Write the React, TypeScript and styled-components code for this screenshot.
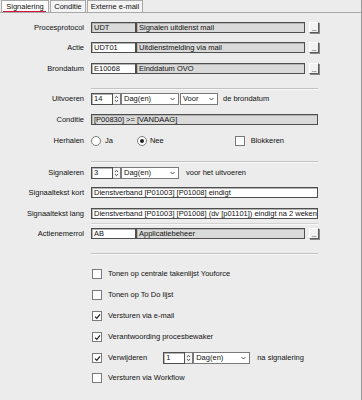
import React from "react";
import styled, { createGlobalStyle } from "styled-components";

const Global = createGlobalStyle`
  html, body { margin: 0; padding: 0; background: #ececec; }
  body { font-family: "Liberation Sans", Arial, sans-serif; font-size: 7.5px; color: #111; }
  * { box-sizing: border-box; }
`;

const Page = styled.div`
  width: 362px;
  height: 400px;
  background: #ececec;
  border-right: 1px solid #9a9a9a;
  display: flex;
  flex-direction: column;
  overflow: hidden;
`;

const TabStrip = styled.div`
  height: 13px;
  display: flex;
  align-items: flex-end;
  border-bottom: 1px solid #a8a8a8;
  padding-left: 1px;
`;

const Tab = styled.div<{ $active?: boolean; $w: number }>`
  position: relative;
  width: ${(p) => p.$w}px;
  height: 12px;
  margin-right: 1px;
  background: ${(p) => (p.$active ? "#ffffff" : "#f3f3f3")};
  border: 1px solid #a8a8a8;
  border-bottom: none;
  display: flex;
  align-items: center;
  justify-content: center;
  line-height: 1;
  color: #111;
`;

const TabMark = styled.span`
  position: absolute;
  left: 1px;
  right: 2px;
  bottom: 0px;
  height: 1px;
  background: #d4163c;
`;

const Body = styled.div`
  display: flex;
  flex-direction: column;
`;

const Row = styled.div<{ $mt: number; $h?: number }>`
  display: flex;
  align-items: center;
  margin-top: ${(p) => p.$mt}px;
  height: ${(p) => p.$h ?? 11}px;
`;

const Label = styled.div`
  width: 84px;
  margin-right: 7px;
  text-align: right;
  white-space: nowrap;
  line-height: 1;
`;

const Box = styled.div<{ $w: number; $gray?: boolean; $h?: number }>`
  width: ${(p) => p.$w}px;
  height: ${(p) => p.$h ?? 11}px;
  background: ${(p) => (p.$gray ? "#dadada" : "#ffffff")};
  border: 1px solid #4e4e4e;
  box-shadow: inset 1px 1px 0 #b4b4b4;
  padding-left: 2px;
  display: flex;
  align-items: center;
  white-space: nowrap;
  overflow: hidden;
  line-height: 1;
  flex: none;
`;

const Dots = styled.div`
  width: 10px;
  height: 11px;
  margin-left: 4px;
  background: #f2f2f2;
  border: 1px solid;
  border-color: #ffffff #5a5a5a #5a5a5a #ffffff;
  box-shadow: 1px 1px 0 #8a8a8a;
  display: flex;
  align-items: flex-end;
  justify-content: center;
  font-size: 7px;
  line-height: 6px;
  letter-spacing: -0.5px;
  flex: none;
`;

const Spin = styled.div`
  width: 8px;
  height: 12px;
  border: 1px solid #7a7a7a;
  border-left: none;
  background: #f4f4f4;
  display: flex;
  align-items: center;
  justify-content: center;
  flex: none;
`;

const Select = styled.div<{ $w: number; $ml?: number }>`
  width: ${(p) => p.$w}px;
  height: 12px;
  margin-left: ${(p) => p.$ml ?? 0}px;
  background: #ffffff;
  border: 1px solid #7a7a7a;
  padding: 0 3px 0 2px;
  display: flex;
  align-items: center;
  justify-content: space-between;
  line-height: 1;
  flex: none;
`;

const Text = styled.span<{ $ml: number }>`
  margin-left: ${(p) => p.$ml}px;
  white-space: nowrap;
  line-height: 1;
`;

const Sep = styled.div<{ $mt: number; $light?: boolean }>`
  margin-top: ${(p) => p.$mt}px;
  margin-left: 91px;
  width: 227px;
  height: 1px;
  background: ${(p) => (p.$light ? "#d2d2d2" : "#c2c2c2")};
  box-shadow: 0 1px 0 #f8f8f8;
`;

const Radio = styled.span<{ $ml: number; $on?: boolean }>`
  margin-left: ${(p) => p.$ml}px;
  width: 10px;
  height: 10px;
  border-radius: 50%;
  border: 1px solid #7a7a7a;
  background: #fff;
  display: flex;
  align-items: center;
  justify-content: center;
  flex: none;
  &::after {
    content: "";
    display: ${(p) => (p.$on ? "block" : "none")};
    width: 4px;
    height: 4px;
    border-radius: 50%;
    background: #222;
  }
`;

const Check = styled.span<{ $ml: number }>`
  margin-left: ${(p) => p.$ml}px;
  width: 10px;
  height: 10px;
  border: 1px solid #7a7a7a;
  background: #fff;
  display: flex;
  align-items: center;
  justify-content: center;
  flex: none;
`;

const Chevron = () => (
  <svg width="5" height="4" viewBox="0 0 5 4">
    <path d="M0.5 1 L2.5 3 L4.5 1" fill="none" stroke="#444" strokeWidth="0.9" />
  </svg>
);

const SpinIcon = () => (
  <svg width="5" height="8" viewBox="0 0 5 8">
    <path d="M1 3 L2.5 1.3 L4 3" fill="none" stroke="#444" strokeWidth="0.9" />
    <path d="M1 5 L2.5 6.7 L4 5" fill="none" stroke="#444" strokeWidth="0.9" />
  </svg>
);

const Tick = () => (
  <svg width="7" height="7" viewBox="0 0 7 7">
    <path d="M1 3.6 L2.8 5.4 L6 1.4" fill="none" stroke="#222" strokeWidth="1.3" />
  </svg>
);

const CheckBox = ({ on, ml }: { on?: boolean; ml: number }) => (
  <Check $ml={ml}>{on ? <Tick /> : null}</Check>
);

const NumberSpin = ({ value, ml, w }: { value: string; ml?: number; w: number }) => (
  <>
    <Box $w={w} $h={12} style={ml ? { marginLeft: ml } : undefined}>
      {value}
    </Box>
    <Spin>
      <SpinIcon />
    </Spin>
  </>
);

const Dropdown = ({ label, w, ml }: { label: string; w: number; ml?: number }) => (
  <Select $w={w} $ml={ml}>
    <span>{label}</span>
    <Chevron />
  </Select>
);

const LookupRow = ({
  mt,
  label,
  code,
  desc,
  codeGray,
}: {
  mt: number;
  label: string;
  code: string;
  desc: string;
  codeGray?: boolean;
}) => (
  <Row $mt={mt}>
    <Label>{label}</Label>
    <Box $w={45} $gray={codeGray}>
      {code}
    </Box>
    <Box $w={169} $gray>
      {desc}
    </Box>
    <Dots>...</Dots>
  </Row>
);

const CheckRow = ({ mt, on, label, children }: { mt: number; on?: boolean; label: string; children?: React.ReactNode }) => (
  <Row $mt={mt} $h={12}>
    <CheckBox on={on} ml={92} />
    <Text $ml={6}>{label}</Text>
    {children}
  </Row>
);

export default function App() {
  return (
    <Page>
      <Global />
      <TabStrip>
        <Tab $active $w={48}>
          Signalering
          <TabMark />
        </Tab>
        <Tab $w={36}>Conditie</Tab>
        <Tab $w={56}>Externe e-mail</Tab>
      </TabStrip>
      <Body>
        <LookupRow mt={9} label="Procesprotocol" code="UDT" desc="Signalen uitdienst mail" codeGray />
        <LookupRow mt={9} label="Actie" code="UDT01" desc="Uitdienstmelding via mail" />
        <LookupRow mt={10} label="Brondatum" code="E10068" desc="Einddatum OVO" />

        <Sep $mt={14} />

        <Row $mt={4} $h={12}>
          <Label>Uitvoeren</Label>
          <NumberSpin value="14" w={22} />
          <Dropdown label="Dag(en)" w={58} />
          <Dropdown label="Voor" w={38} ml={1} />
          <Text $ml={5}>de brondatum</Text>
        </Row>

        <Row $mt={9}>
          <Label>Conditie</Label>
          <Box $w={227} $gray>
            [P00830] &gt;= [VANDAAG]
          </Box>
        </Row>

        <Row $mt={11} $h={10}>
          <Label>Herhalen</Label>
          <Radio $ml={0} />
          <Text $ml={4}>Ja</Text>
          <Radio $ml={24} $on />
          <Text $ml={3}>Nee</Text>
          <CheckBox ml={71} />
          <Text $ml={6}>Blokkeren</Text>
        </Row>

        <Sep $mt={15} />

        <Row $mt={5} $h={12}>
          <Label>Signaleren</Label>
          <NumberSpin value="3" w={22} />
          <Dropdown label="Dag(en)" w={58} />
          <Text $ml={7}>voor het uitvoeren</Text>
        </Row>

        <Row $mt={8}>
          <Label>Signaaltekst kort</Label>
          <Box $w={227}>Dienstverband [P01003] [P01008] eindigt</Box>
        </Row>

        <Row $mt={10}>
          <Label>Signaaltekst lang</Label>
          <Box $w={227}>Dienstverband [P01003] [P01008] (dv [p01101]) eindigt na 2 weken</Box>
        </Row>

        <Sep $mt={4} $light />

        <LookupRow mt={4} label="Actienemerrol" code="AB" desc="Applicatiebeheer" />

        <Sep $mt={14} />

        <CheckRow mt={14} label="Tonen op centrale takenlijst Youforce" />
        <CheckRow mt={9} label="Tonen op To Do lijst" />
        <CheckRow mt={9} on label="Versturen via e-mail" />
        <CheckRow mt={9} on label="Verantwoording procesbewaker" />
        <CheckRow mt={9} on label="Verwijderen">
          <NumberSpin value="1" w={22} ml={16} />
          <Dropdown label="Dag(en)" w={57} />
          <Text $ml={7}>na signalering</Text>
        </CheckRow>
        <CheckRow mt={8} label="Versturen via Workflow" />
      </Body>
    </Page>
  );
}
